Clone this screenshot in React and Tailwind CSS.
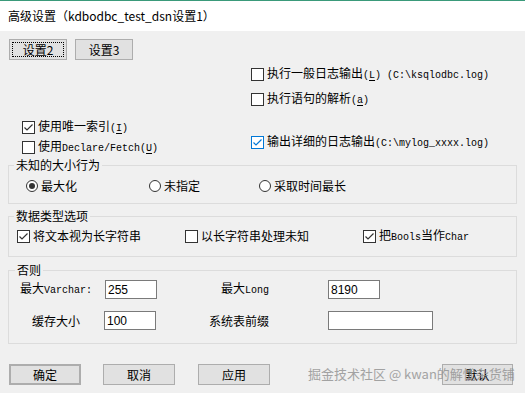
import React from "react";

function M({ children }) {
  return <span className="font-['Liberation_Mono',monospace] text-[10px]">{children}</span>;
}
function U({ children }) {
  return <span className="underline underline-offset-[2px]">{children}</span>;
}

function Check({ checked, blue, children, className = "" }) {
  return (
    <div className={"flex items-center h-[20px] whitespace-nowrap " + className}>
      <span
        className={
          "w-[13px] h-[13px] border bg-white flex items-center justify-center shrink-0 " +
          (blue ? "border-[#0078d7]" : "border-[#333333]")
        }
      >
        {checked && (
          <svg width="11" height="11" viewBox="0 0 11 11">
            <path
              d="M1.5 5.5 L4 8 L9.5 2.5"
              fill="none"
              stroke={blue ? "#0078d7" : "#333333"}
              strokeWidth="1.2"
            />
          </svg>
        )}
      </span>
      <span className="ml-[3px]">{children}</span>
    </div>
  );
}

function Radio({ on, children }) {
  return (
    <div className="flex items-center h-[14px] whitespace-nowrap">
      <span className="w-[12px] h-[12px] rounded-full border border-[#333333] bg-white flex items-center justify-center shrink-0">
        {on && <span className="w-[6px] h-[6px] rounded-full bg-[#333333]" />}
      </span>
      <span className="ml-[3px]">{children}</span>
    </div>
  );
}

function Btn({ children, className = "" }) {
  return (
    <div
      className={
        "h-[21px] flex items-center justify-center bg-[#e1e1e1] border border-[#adadad] shrink-0 " +
        className
      }
    >
      {children}
    </div>
  );
}

function Input({ value, className = "" }) {
  return (
    <div
      className={
        "h-[19px] bg-white border border-[#7a7a7a] flex items-center pl-[2px] font-['Liberation_Sans',sans-serif] text-[12px] shrink-0 " +
        className
      }
    >
      {value}
    </div>
  );
}

export default function App() {
  return (
    <div className="w-[525px] h-[393px] bg-[#f0f0f0] relative overflow-hidden font-['Noto_Sans_CJK_SC',sans-serif] text-[12px] leading-[14px] text-black">
      {/* title bar */}
      <div className="h-[31px] bg-white border-t border-[#3a9a7a] flex items-center pl-[8px] text-[12px] whitespace-nowrap">
        高级设置（kdbodbc_test_dsn设置1）
      </div>

      {/* top section */}
      <div className="flex h-[134px]">
        <div className="w-[251px] pl-[9px] pt-[8px] shrink-0">
          <div className="flex gap-[8px]">
            <Btn className="w-[58px] relative">
              <span className="absolute inset-[2px] border border-dotted border-black" />
              设置2
            </Btn>
            <Btn className="w-[58px]">设置3</Btn>
          </div>
          <div className="mt-[57px] ml-[13px]">
            <Check checked>
              使用唯一索引<M>(<U>I</U>)</M>
            </Check>
            <Check>
              使用<M>Declare/Fetch(<U>U</U>)</M>
            </Check>
          </div>
        </div>
        <div className="pt-[33px]">
          <Check>
            执行一般日志输出<M>(<U>L</U>) (C:\ksqlodbc.log)</M>
          </Check>
          <Check className="mt-[5px]">
            执行语句的解析<M>(<U>a</U>)</M>
          </Check>
          <Check className="mt-[23px]" checked blue>
            输出详细的日志输出<M>(C:\mylog_xxxx.log)</M>
          </Check>
        </div>
      </div>

      {/* group 1 */}
      <div className="relative mx-[8px] h-[39px] border border-[#dcdcdc] pt-[13px] pl-[17px] flex">
        <span className="absolute -top-[8px] left-[5px] bg-[#f0f0f0] px-[2px] leading-[14px] whitespace-nowrap">
          未知的大小行为
        </span>
        <div className="w-[123px]">
          <Radio on>最大化</Radio>
        </div>
        <div className="w-[110px]">
          <Radio>未指定</Radio>
        </div>
        <div>
          <Radio>采取时间最长</Radio>
        </div>
      </div>

      {/* group 2 */}
      <div className="relative mx-[8px] mt-[12px] h-[41px] border border-[#dcdcdc] pt-[9px] pl-[8px] flex">
        <span className="absolute -top-[8px] left-[5px] bg-[#f0f0f0] px-[2px] leading-[14px] whitespace-nowrap">
          数据类型选项
        </span>
        <div className="w-[168px]">
          <Check checked>将文本视为长字符串</Check>
        </div>
        <div className="w-[178px]">
          <Check>以长字符串处理未知</Check>
        </div>
        <div>
          <Check checked>
            把<M>Bools</M>当作<M>Char</M>
          </Check>
        </div>
      </div>

      {/* group 3 */}
      <div className="relative mx-[8px] mt-[13px] h-[74px] border border-[#dcdcdc] pt-[9px]">
        <span className="absolute -top-[8px] left-[6px] bg-[#f0f0f0] px-[2px] leading-[14px] whitespace-nowrap">
          否则
        </span>
        <div className="flex items-center h-[19px]">
          <div className="w-[96px] pl-[11px] whitespace-nowrap">
            最大<M>Varchar:</M>
          </div>
          <Input value="255" className="w-[52px]" />
          <div className="w-[171px] pl-[64px] whitespace-nowrap">
            最大<M>Long</M>
          </div>
          <Input value="8190" className="w-[52px]" />
        </div>
        <div className="flex items-center h-[19px] mt-[12px]">
          <div className="w-[95px] pl-[23px] whitespace-nowrap">缓存大小</div>
          <Input value="100" className="w-[52px]" />
          <div className="w-[172px] pl-[53px] whitespace-nowrap">系统表前缀</div>
          <Input value="" className="w-[105px]" />
        </div>
      </div>

      {/* bottom buttons */}
      <div className="flex mt-[20px] pl-[9px]">
        <Btn className="w-[72px] border-2 border-[#0078d7]">确定</Btn>
        <Btn className="w-[72px] ml-[22px]">取消</Btn>
        <Btn className="w-[72px] ml-[23px]">应用</Btn>
        <Btn className="w-[71px] ml-[172px]">默认</Btn>
      </div>

      {/* watermark */}
      <div className="absolute left-[308px] top-[366px] text-[13px] leading-[16px] text-[#8f8f8f] opacity-80 whitespace-nowrap font-['Noto_Sans_CJK_SC',sans-serif]">
        掘金技术社区 @ kwan的解忧杂货铺
      </div>
    </div>
  );
}
